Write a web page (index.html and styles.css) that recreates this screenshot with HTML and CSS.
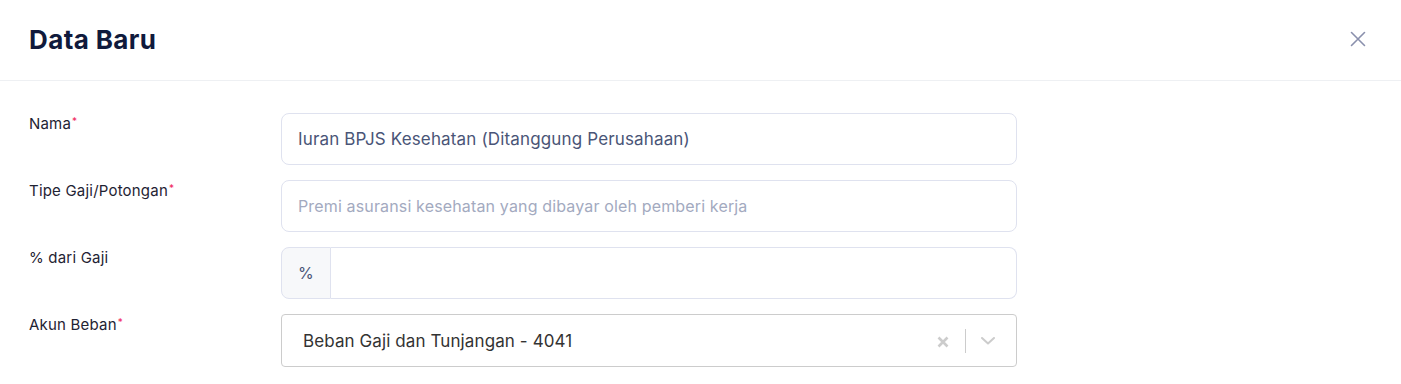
FILE: index.html
```html
<!DOCTYPE html>
<html lang="id">
<head>
<meta charset="utf-8">
<title>Data Baru</title>
<link rel="stylesheet" href="styles.css">
</head>
<body>
<div class="modal">
  <header class="modal-header">
    <h1 class="modal-title">Data Baru</h1>
    <button class="close-btn" aria-label="Tutup">
      <svg width="16" height="16" viewBox="0 0 16 16"><path d="M1.5 1.5 L14.5 14.5 M14.5 1.5 L1.5 14.5" stroke="#8a90ad" stroke-width="1.6" stroke-linecap="round" fill="none"/></svg>
    </button>
  </header>
  <form class="form">
    <div class="row">
      <label class="label">Nama<span class="req">*</span></label>
      <input class="input" type="text" value="Iuran BPJS Kesehatan (Ditanggung Perusahaan)">
    </div>
    <div class="row">
      <label class="label">Tipe Gaji/Potongan<span class="req">*</span></label>
      <input class="input" type="text" placeholder="Premi asuransi kesehatan yang dibayar oleh pemberi kerja">
    </div>
    <div class="row">
      <label class="label">% dari Gaji</label>
      <div class="group">
        <span class="addon">%</span>
        <input class="input group-input" type="text">
      </div>
    </div>
    <div class="row">
      <label class="label">Akun Beban<span class="req">*</span></label>
      <div class="select">
        <span class="select-value">Beban Gaji dan Tunjangan - 4041</span>
        <div class="indicators">
          <span class="ind clear">
            <svg width="12" height="12" viewBox="0 0 12 12"><path d="M1.5 1.5 L10.5 10.5 M10.5 1.5 L1.5 10.5" stroke="#cccccc" stroke-width="2.6" fill="none"/></svg>
          </span>
          <span class="sep"></span>
          <span class="ind chev">
            <svg width="14" height="8" viewBox="0 0 14 8"><path d="M1 1 L7 6.5 L13 1" stroke="#cccccc" stroke-width="2" fill="none" stroke-linecap="round" stroke-linejoin="round"/></svg>
          </span>
        </div>
      </div>
    </div>
  </form>
</div>
</body>
</html>
```

FILE: styles.css
```css
* { box-sizing: border-box; }
html, body { margin: 0; padding: 0; background: #ffffff; }
body { font-family: Inter, "Noto Sans", sans-serif; color: #1f2333; }

.modal { width: 1401px; }

.modal-header {
  height: 81px;
  border-bottom: 1px solid #eef0f3;
  display: flex;
  align-items: center;
  justify-content: space-between;
  padding: 0 35px 2px 29px;
}
.modal-title {
  margin: 0;
  font-size: 26px;
  font-weight: 700;
  color: #101a3c;
  letter-spacing: 0.4px;
}
.close-btn {
  border: 0;
  background: none;
  padding: 0;
  width: 16px;
  height: 16px;
  display: flex;
  cursor: pointer;
}

.form {
  padding: 32px 0 0 29px;
  display: flex;
  flex-direction: column;
  gap: 15px;
}
.row {
  display: grid;
  grid-template-columns: 252px 736px;
  align-items: start;
}
.label {
  font-size: 15px;
  line-height: 20px;
  padding-top: 1px;
  color: #1f2333;
  letter-spacing: 0.2px;
}
.req {
  color: #f0245a;
  font-size: 10px;
  vertical-align: top;
  position: relative;
  top: -3px;
  margin-left: 1px;
}

.input {
  height: 52px;
  width: 100%;
  border: 1px solid #dfe2ef;
  border-radius: 8px;
  padding: 0 16px;
  font-family: Inter, "Noto Sans", sans-serif;
  font-size: 17px;
  letter-spacing: 0.15px;
  color: #4a5577;
  background: #fff;
  outline: none;
}
.input::placeholder { color: #a3aabf; opacity: 1; font-size: 16px; letter-spacing: 0.15px; }

.group { display: flex; height: 52px; }
.addon {
  width: 50px;
  flex: none;
  display: flex;
  align-items: center;
  padding-left: 16px;
  background: #f7f8fa;
  border: 1px solid #dfe2ef;
  border-radius: 8px 0 0 8px;
  font-size: 16px;
  color: #4a5577;
}
.group-input {
  border-left: 0;
  border-radius: 0 8px 8px 0;
}

.select {
  height: 53px;
  border: 1px solid #cccccc;
  border-radius: 4px;
  display: flex;
  align-items: center;
  justify-content: space-between;
  padding: 0 21px 0 21px;
}
.select-value { font-size: 17px; letter-spacing: 0.1px; color: #333333; }
.indicators { display: flex; align-items: center; }
.ind { display: flex; align-items: center; }
.clear { margin-right: 16px; margin-top: 2px; }
.sep { width: 1px; height: 24px; background: #cccccc; }
.chev { margin-left: 15px; margin-top: 1px; }
```
